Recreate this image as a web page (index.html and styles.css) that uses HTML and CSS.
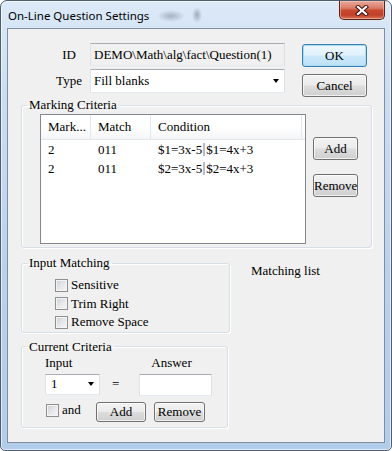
FILE: index.html
```html
<!DOCTYPE html>
<html lang="en">
<head>
    <meta charset="UTF-8">
    <title>On-Line Question Settings</title>
    <link rel="stylesheet" href="styles.css">
</head>
<body>
    <div class="window">
        <div class="titlebar">
            <span class="title">On-Line Question Settings</span>
            <button class="close">
                <svg width="14" height="11" viewBox="0 0 14 11">
                    <path d="M3 2 L11 9 M11 2 L3 9" stroke="#3d1510" stroke-width="4.2" stroke-linecap="square"/>
                    <path d="M3 2 L11 9 M11 2 L3 9" stroke="#fff" stroke-width="2.2" stroke-linecap="square"/>
                </svg>
            </button>
        </div>

        <div class="client">
            <div class="top">
                <div class="fields">
                    <span class="lbl">ID</span>
                    <div class="textbox readonly">DEMO\Math\alg\fact\Question(1)</div>
                    <span class="lbl">Type</span>
                    <div class="combo type-combo">Fill blanks<span class="arrow"></span></div>
                </div>
                <div class="dlg-buttons">
                    <button class="btn default">OK</button>
                    <button class="btn">Cancel</button>
                </div>
            </div>

            <!-- Marking Criteria -->
            <fieldset class="group marking">
                <legend>Marking Criteria</legend>
                <div class="listview">
                    <div class="lv-row lv-head">
                        <div>Mark...</div><div>Match</div><div>Condition</div><div></div>
                    </div>
                    <div class="lv-row">
                        <div>2</div><div>011</div><div>$1=3x-5<span class="sep"></span>$1=4x+3</div><div></div>
                    </div>
                    <div class="lv-row">
                        <div>2</div><div>011</div><div>$2=3x-5<span class="sep"></span>$2=4x+3</div><div></div>
                    </div>
                </div>
                <div class="side-buttons">
                    <button class="btn small add">Add</button>
                    <button class="btn small remove">Remove</button>
                </div>
            </fieldset>

            <div class="bottom">
                <div class="left-col">
                    <fieldset class="group matching">
                        <legend>Input Matching</legend>
                        <label class="check"><span class="chk"></span>Sensitive</label>
                        <label class="check"><span class="chk"></span>Trim Right</label>
                        <label class="check"><span class="chk"></span>Remove Space</label>
                    </fieldset>

                    <fieldset class="group current">
                        <legend>Current Criteria</legend>
                        <div class="crit-grid">
                            <span class="col-lbl">Input</span>
                            <span></span>
                            <span class="col-lbl answer-lbl">Answer</span>
                            <div class="combo input-combo">1<span class="arrow"></span></div>
                            <span class="equals">=</span>
                            <div class="textbox answer"></div>
                        </div>
                        <div class="crit-actions">
                            <label class="check and"><span class="chk"></span>and</label>
                            <button class="btn crit-btn">Add</button>
                            <button class="btn crit-btn">Remove</button>
                        </div>
                    </fieldset>
                </div>
                <div class="matching-list">Matching list</div>
            </div>
        </div>
    </div>
</body>
</html>
```

FILE: styles.css
```css
* {
    box-sizing: border-box;
}
body {
    margin: 0;
    background: #fff;
    font-family: "Liberation Serif", "Times New Roman", serif;
    font-size: 13px;
    color: #000;
}
.window {
    width: 392px;
    height: 451px;
    border: 1px solid #4f5d6c;
    border-radius: 7px 7px 5px 5px;
    background: linear-gradient(180deg, #dce9f7 0%, #cadef3 20%, #b9d2ec 60%, #b2cdea 100%);
    box-shadow: inset 0 0 0 1px rgba(255, 255, 255, 0.6);
    display: flex;
    flex-direction: column;
    overflow: hidden;
}
.titlebar {
    height: 27px;
    flex: none;
    display: flex;
    justify-content: space-between;
    align-items: flex-start;
    padding: 0 6px 0 7px;
    background:
        radial-gradient(ellipse 14px 6px at 170px 15px, rgba(70, 80, 100, 0.35), transparent),
        radial-gradient(ellipse 5px 8px at 196px 14px, rgba(70, 80, 100, 0.4), transparent);
}
.title {
    font-family: "Noto Sans", sans-serif;
    font-size: 11.5px;
    line-height: 16px;
    margin-top: 7px;
}
.close {
    width: 46px;
    height: 19px;
    padding: 0;
    border: 1px solid #5b2319;
    border-top: none;
    border-radius: 0 0 5px 5px;
    background: linear-gradient(180deg, #e9aa9b 0%, #d97a66 40%, #c9492f 52%, #c0402a 78%, #d9785a 100%);
    box-shadow: inset 0 0 0 1px rgba(255, 210, 200, 0.45);
    display: flex;
    align-items: center;
    justify-content: center;
}
.client {
    flex: 1;
    margin: 0 6px 7px 6px;
    border: 1px solid #7f8f9f;
    background: #f0f0f0;
}

/* top: ID / Type and OK / Cancel */
.top {
    display: flex;
    padding-top: 14px;
}
.fields {
    margin-left: 40px;
    display: grid;
    grid-template-columns: 42px 195px;
    grid-template-rows: 23px 24px;
    row-gap: 3px;
}
.lbl {
    text-align: center;
    align-self: center;
}
.textbox, .combo {
    background: #fff;
    border: 1px solid;
    border-color: #abadb3 #dbdfe6 #e3e9ef #e2e3ea;
    padding-left: 3px;
    display: flex;
    align-items: center;
    position: relative;
}
.textbox.readonly {
    background: #f0f0f0;
}
.arrow {
    position: absolute;
    right: 5px;
    top: 50%;
    margin-top: -2px;
    border-left: 3.5px solid transparent;
    border-right: 3.5px solid transparent;
    border-top: 4px solid #000;
}
.dlg-buttons {
    margin-left: 17px;
    margin-top: 1px;
    display: flex;
    flex-direction: column;
    gap: 7px;
}
.btn {
    font-family: "Liberation Serif", "Times New Roman", serif;
    font-size: 13px;
    color: #000;
    padding: 0;
    border: 1px solid #707070;
    border-radius: 3px;
    background: linear-gradient(180deg, #f2f2f2 0%, #ebebeb 48%, #dddddd 52%, #cfcfcf 100%);
    box-shadow: inset 0 0 0 1px rgba(255, 255, 255, 0.7);
}
.dlg-buttons .btn {
    width: 65px;
    height: 23px;
}
.btn.default {
    border-color: #3c7fb1;
    background: linear-gradient(180deg, #eef7fd 0%, #e0f1fc 48%, #cce8fa 52%, #bde0f6 100%);
    box-shadow: inset 0 0 0 1px #a6dcf6;
}

/* group boxes */
.group {
    margin: 0 0 0 13px;
    padding: 0;
    border: 1px solid #d5dfe5;
    border-radius: 3px;
    box-shadow: inset 1px 1px 0 #fff, 1px 1px 0 #fff;
}
.group legend {
    padding: 0 2px;
    line-height: 16px;
}
.marking {
    width: 351px;
    display: flex;
    padding: 1px 0 3px 18px;
}
.marking legend {
    margin-left: -13px;
}
.listview {
    width: 266px;
    height: 130px;
    border: 1px solid #828790;
    background: #fff;
}
.lv-row {
    display: grid;
    grid-template-columns: 50px 60px 151px 1fr;
    height: 19px;
    align-items: center;
}
.lv-row > div {
    padding-left: 7px;
    white-space: nowrap;
}
.lv-head {
    height: 25px;
    align-items: stretch;
    border-bottom: 1px solid #e2e6eb;
    background: linear-gradient(180deg, #fff 0%, #fff 50%, #f5f6f8 100%);
}
.lv-head > div {
    display: flex;
    align-items: center;
    border-right: 1px solid #e3e8ee;
}
.lv-head > div:last-child {
    border-right: none;
}
.sep {
    display: inline-block;
    width: 2px;
    height: 13px;
    margin: 0 1px -2px 1px;
    background: #b7bec7;
}
.side-buttons {
    margin-left: 7px;
    display: flex;
    flex-direction: column;
}
.btn.small {
    width: 45px;
    height: 23px;
}
.btn.add {
    margin-top: 23px;
}
.btn.remove {
    margin-top: 14px;
}

/* bottom part */
.bottom {
    display: flex;
}
.left-col {
    display: flex;
    flex-direction: column;
}
.matching {
    width: 209px;
    margin-top: 7px;
    padding: 5px 0 0 33px;
}
.matching legend {
    margin-left: -28px;
}
.check {
    display: flex;
    align-items: center;
    height: 18.5px;
}
.chk {
    width: 13px;
    height: 13px;
    margin-right: 3px;
    border: 1px solid #8e8f8f;
    background: linear-gradient(135deg, #cdd1d6 0%, #e9eaec 60%, #f7f7f7 100%);
    box-shadow: inset 0 0 0 1px #f4f4f4;
}
.matching-list {
    margin: 15px 0 0 21px;
    line-height: 16px;
}
.current {
    width: 207px;
    margin-top: 6px;
    padding: 0 0 5px 23px;
}
.current legend {
    margin-left: -18px;
}
.crit-grid {
    display: grid;
    grid-template-columns: 55px 39px 73px;
    grid-template-rows: 16px 23px;
    row-gap: 2px;
    align-items: center;
}
.answer-lbl {
    text-align: center;
    padding-right: 8px;
}
.input-combo {
    height: 21px;
    padding-left: 5px;
}
.input-combo .arrow {
    right: 5px;
}
.equals {
    padding-left: 12px;
}
.textbox.answer {
    height: 22px;
    margin-top: 1px;
}
.crit-actions {
    display: flex;
    align-items: center;
    margin-top: 6px;
    height: 20px;
}
.check.and {
    width: 51px;
    padding-left: 1px;
    margin-top: -3px;
}
.crit-btn {
    height: 20px;
    width: 50px;
}
.crit-btn + .crit-btn {
    margin-left: 8px;
    width: 51px;
}
```
